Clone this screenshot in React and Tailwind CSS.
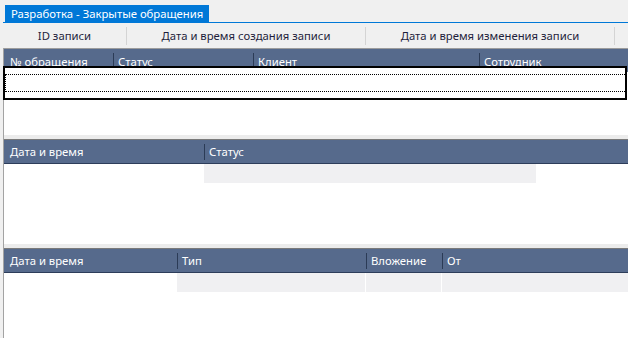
import React from "react";

function HeaderCell({ width, text, first, grow, shift }) {
  return (
    <div
      className={`relative h-full flex items-center ${grow ? "flex-1" : ""}`}
      style={grow ? undefined : { width }}
    >
      {!first && (
        <div className="absolute left-0 top-[4px] bottom-[3px] w-px bg-[#2b3b56]" />
      )}
      <span
        className={`${first ? "pl-[6px]" : "pl-[5px]"} ${shift ? "pt-[4px]" : "pt-[1px]"} whitespace-nowrap`}
      >
        {text}
      </span>
    </div>
  );
}

export default function App() {
  return (
    <div
      className="w-[628px] h-[338px] bg-[#f0f0f0] overflow-hidden relative flex flex-col text-[11.3px]"
      style={{ fontFamily: '"Noto Sans", "Liberation Sans", sans-serif' }}
    >
      {/* tab row */}
      <div className="h-[23px] pl-[3px] pt-[5px] flex shrink-0">
        <div className="flex-1 flex border-b border-[#0078d7]">
          <div className="ml-[2px] h-[17px] bg-[#0078d7] text-white px-[6px] leading-[17px] whitespace-nowrap">
            Разработка - Закрытые обращения
          </div>
        </div>
      </div>

      {/* top column bar */}
      <div className="h-[25px] pl-[3px] flex items-center shrink-0 text-[#1e1e3c]">
        <div className="w-[123px] text-center pt-[1px]">ID записи</div>
        <div className="w-px h-[18px] bg-[#d4d4d4]" />
        <div className="w-[238px] text-center pt-[1px]">Дата и время создания записи</div>
        <div className="w-px h-[18px] bg-[#d4d4d4]" />
        <div className="w-[248px] text-center pt-[1px]">Дата и время изменения записи</div>
        <div className="w-px h-[18px] bg-[#d4d4d4]" />
      </div>

      {/* grids */}
      <div className="flex-1 ml-[3px] border-l border-[#a3a3a3] flex flex-col">
        {/* grid 1 */}
        <div className="h-[87px] flex flex-col border-t border-[#9c9c9c] shrink-0">
          <div className="h-[23px] bg-[#566a8c] text-white flex shrink-0">
            <HeaderCell first shift width={109} text="№ обращения" />
            <HeaderCell shift width={140} text="Статус" />
            <HeaderCell shift width={226} text="Клиент" />
            <HeaderCell shift grow text="Сотрудник" />
          </div>
          <div className="flex-1 bg-white" />
        </div>

        {/* splitter */}
        <div className="h-[4px] bg-[#ececec] shrink-0" />

        {/* grid 2 */}
        <div className="h-[105px] flex flex-col border-t border-[#7a7a7a] shrink-0">
          <div className="h-[24px] bg-[#566a8c] text-white flex border-b border-[#2d3d5a] shrink-0">
            <HeaderCell first width={200} text="Дата и время" />
            <HeaderCell grow text="Статус" />
          </div>
          <div className="flex-1 bg-white">
            <div className="flex h-[19px]">
              <div className="w-[200px]" />
              <div className="w-[332px] bg-[#f0f0f2]" />
            </div>
          </div>
        </div>

        {/* splitter */}
        <div className="h-[4px] bg-[#ececec] shrink-0" />

        {/* grid 3 */}
        <div className="flex-1 flex flex-col border-t border-[#7a7a7a]">
          <div className="h-[24px] bg-[#566a8c] text-white flex border-b border-[#2d3d5a] shrink-0">
            <HeaderCell first width={173} text="Дата и время" />
            <HeaderCell width={189} text="Тип" />
            <HeaderCell width={76} text="Вложение" />
            <HeaderCell grow text="От" />
          </div>
          <div className="flex-1 bg-white">
            <div className="flex h-[19px]">
              <div className="w-[173px]" />
              <div className="w-[188px] bg-[#f0f0f2]" />
              <div className="w-px" />
              <div className="w-[75px] bg-[#f0f0f2]" />
              <div className="w-px" />
              <div className="flex-1 bg-[#f0f0f2]" />
            </div>
          </div>
        </div>
      </div>

      {/* selected row focus overlay */}
      <div className="absolute left-[3px] top-[66px] w-[624px] h-[34px] border-2 border-black bg-white">
        <div className="absolute left-0 top-[6px] -right-[2px] h-[18px] border-t border-b border-l border-dotted border-black" />
      </div>
    </div>
  );
}
